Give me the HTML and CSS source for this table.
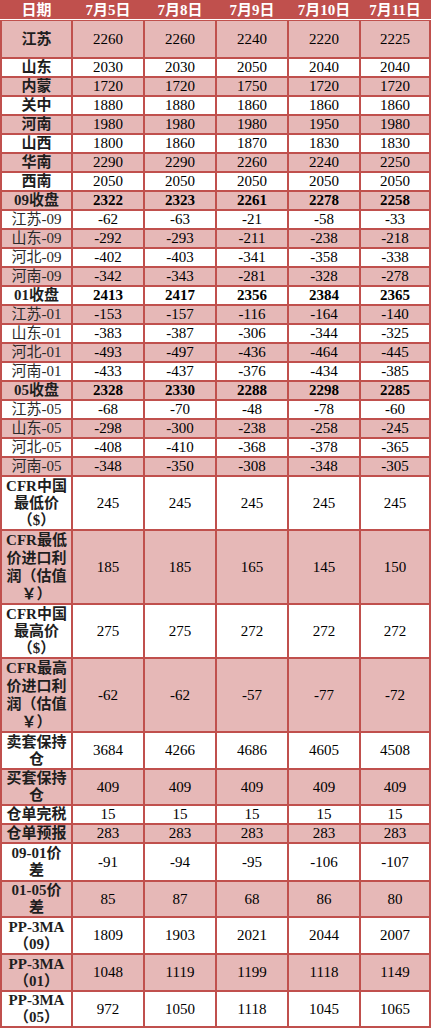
FILE: index.html
```html
<!DOCTYPE html>
<html lang="zh-CN">
<head>
<meta charset="utf-8">
<title>PP价格表</title>
<link rel="stylesheet" href="styles.css">
</head>
<body>
<table class="sheet">
<colgroup><col class="c0"><col class="c"><col class="c"><col class="c"><col class="c"><col class="c5"></colgroup>
<thead>
<tr class="hd"><th>日期</th><th>7月5日</th><th>7月8日</th><th>7月9日</th><th>7月10日</th><th>7月11日</th></tr>
</thead>
<tbody>
<tr class="alt h36"><th>江苏</th><td>2260</td><td>2260</td><td>2240</td><td>2220</td><td>2225</td></tr>
<tr class="h17"><th>山东</th><td>2030</td><td>2030</td><td>2050</td><td>2040</td><td>2040</td></tr>
<tr class="alt h17"><th>内蒙</th><td>1720</td><td>1720</td><td>1750</td><td>1720</td><td>1720</td></tr>
<tr class="h17"><th>关中</th><td>1880</td><td>1880</td><td>1860</td><td>1860</td><td>1860</td></tr>
<tr class="alt h17"><th>河南</th><td>1980</td><td>1980</td><td>1980</td><td>1950</td><td>1980</td></tr>
<tr class="h17"><th>山西</th><td>1800</td><td>1860</td><td>1870</td><td>1830</td><td>1830</td></tr>
<tr class="alt h17"><th>华南</th><td>2290</td><td>2290</td><td>2260</td><td>2240</td><td>2250</td></tr>
<tr class="h17"><th>西南</th><td>2050</td><td>2050</td><td>2050</td><td>2050</td><td>2050</td></tr>
<tr class="alt h17 b"><th>09收盘</th><td>2322</td><td>2323</td><td>2261</td><td>2278</td><td>2258</td></tr>
<tr class="h17"><th class="reg">江苏-09</th><td>-62</td><td>-63</td><td>-21</td><td>-58</td><td>-33</td></tr>
<tr class="alt h17"><th class="reg">山东-09</th><td>-292</td><td>-293</td><td>-211</td><td>-238</td><td>-218</td></tr>
<tr class="h17"><th class="reg">河北-09</th><td>-402</td><td>-403</td><td>-341</td><td>-358</td><td>-338</td></tr>
<tr class="alt h17"><th class="reg">河南-09</th><td>-342</td><td>-343</td><td>-281</td><td>-328</td><td>-278</td></tr>
<tr class="h17 b"><th>01收盘</th><td>2413</td><td>2417</td><td>2356</td><td>2384</td><td>2365</td></tr>
<tr class="alt h17"><th class="reg">江苏-01</th><td>-153</td><td>-157</td><td>-116</td><td>-164</td><td>-140</td></tr>
<tr class="h17"><th class="reg">山东-01</th><td>-383</td><td>-387</td><td>-306</td><td>-344</td><td>-325</td></tr>
<tr class="alt h17"><th class="reg">河北-01</th><td>-493</td><td>-497</td><td>-436</td><td>-464</td><td>-445</td></tr>
<tr class="h17"><th class="reg">河南-01</th><td>-433</td><td>-437</td><td>-376</td><td>-434</td><td>-385</td></tr>
<tr class="alt h17 b"><th>05收盘</th><td>2328</td><td>2330</td><td>2288</td><td>2298</td><td>2285</td></tr>
<tr class="h17"><th class="reg">江苏-05</th><td>-68</td><td>-70</td><td>-48</td><td>-78</td><td>-60</td></tr>
<tr class="alt h17"><th class="reg">山东-05</th><td>-298</td><td>-300</td><td>-238</td><td>-258</td><td>-245</td></tr>
<tr class="h17"><th class="reg">河北-05</th><td>-408</td><td>-410</td><td>-368</td><td>-378</td><td>-365</td></tr>
<tr class="alt h17"><th class="reg">河南-05</th><td>-348</td><td>-350</td><td>-308</td><td>-348</td><td>-305</td></tr>
<tr class="h52"><th>CFR中国<br>最低价<br>（$）</th><td>245</td><td>245</td><td>245</td><td>245</td><td>245</td></tr>
<tr class="alt h72"><th>CFR最低<br>价进口利<br>润（估值<br>￥）</th><td>185</td><td>185</td><td>165</td><td>145</td><td>150</td></tr>
<tr class="h52"><th>CFR中国<br>最高价<br>（$）</th><td>275</td><td>275</td><td>272</td><td>272</td><td>272</td></tr>
<tr class="alt h72"><th>CFR最高<br>价进口利<br>润（估值<br>￥）</th><td>-62</td><td>-62</td><td>-57</td><td>-77</td><td>-72</td></tr>
<tr class="h35"><th>卖套保持<br>仓</th><td>3684</td><td>4266</td><td>4686</td><td>4605</td><td>4508</td></tr>
<tr class="alt h34"><th>买套保持<br>仓</th><td>409</td><td>409</td><td>409</td><td>409</td><td>409</td></tr>
<tr class="h17"><th>仓单完税</th><td>15</td><td>15</td><td>15</td><td>15</td><td>15</td></tr>
<tr class="alt h17"><th>仓单预报</th><td>283</td><td>283</td><td>283</td><td>283</td><td>283</td></tr>
<tr class="h36"><th>09-01价<br>差</th><td>-91</td><td>-94</td><td>-95</td><td>-106</td><td>-107</td></tr>
<tr class="alt h34"><th>01-05价<br>差</th><td>85</td><td>87</td><td>68</td><td>86</td><td>80</td></tr>
<tr class="h35"><th>PP-3MA<br>（09）</th><td>1809</td><td>1903</td><td>2021</td><td>2044</td><td>2007</td></tr>
<tr class="alt h35"><th>PP-3MA<br>（01）</th><td>1048</td><td>1119</td><td>1199</td><td>1118</td><td>1149</td></tr>
<tr class="h34"><th>PP-3MA<br>（05）</th><td>972</td><td>1050</td><td>1118</td><td>1045</td><td>1065</td></tr>
</tbody>
</table>
</body>
</html>
```
FILE: styles.css
```css
html, body {
  margin: 0;
  padding: 0;
  background: #ffffff;
}

.sheet {
  border-collapse: separate;
  border-spacing: 2px;
  table-layout: fixed;
  width: 431px;
  background: linear-gradient(#c0504d 0 19px, #ffffff 19px 20px, #c0504d 20px);
  font-family: "Liberation Serif", "Noto Sans CJK SC", serif;
  font-size: 15px;
  line-height: 17px;
  color: #000000;
}

.c0 { width: 69px; }
.c { width: 70px; }
.c5 { width: 68px; }

.sheet th,
.sheet td {
  padding: 0;
  text-align: center;
  vertical-align: middle;
  background: #ffffff;
  white-space: nowrap;
}

.sheet td {
  font-weight: normal;
}

.sheet tbody th {
  font-weight: bold;
  color: #1e1e1e;
}

.sheet tbody th.reg {
  font-weight: normal;
  color: #2a2a2a;
}

.hd th {
  background: #c0504d;
  color: #ffffff;
  font-weight: bold;
  height: 17px;
}

.sheet tr.alt th,
.sheet tr.alt td {
  background: #e6b8b7;
}

.sheet tr.b td {
  font-weight: bold;
}

.h17 { height: 17px; }
.h34 { height: 34px; }
.h35 { height: 35px; }
.h36 { height: 36px; }
.h52 { height: 52px; }
.h72 { height: 72px; }

.h72 th {
  line-height: 18px;
}
```
